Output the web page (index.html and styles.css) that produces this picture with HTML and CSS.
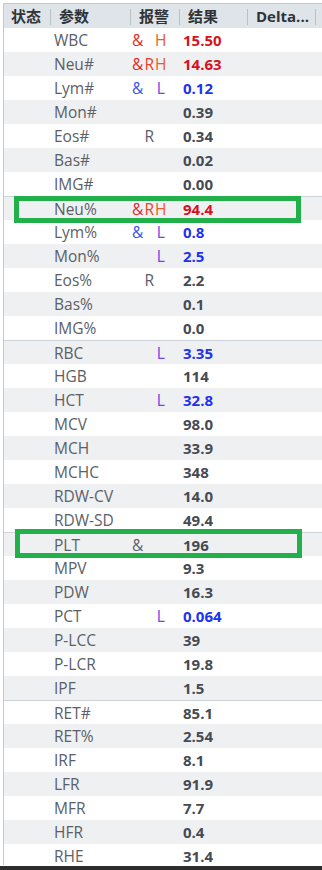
FILE: index.html
```html
<!DOCTYPE html>
<html lang="zh">
<head>
<meta charset="utf-8">
<link rel="stylesheet" href="styles.css">
</head>
<body>
<div class="panel">
  <div class="table">
    <div class="head">
      <div class="hc">状态</div>
      <div class="hc">参数</div>
      <div class="hc">报警</div>
      <div class="hc">结果</div>
      <div class="hc">Delta...</div>
      <div class="hc last"></div>
    </div>
    <div class="body">
      <div class="row"><span></span><span class="p">WBC</span><span class="f"><i class="r1">&amp;</i><i></i><i class="r3">H</i></span><span class="v red">15.50</span></div>
      <div class="row"><span></span><span class="p">Neu#</span><span class="f"><i class="r1">&amp;</i><i class="r2">R</i><i class="r3">H</i></span><span class="v red">14.63</span></div>
      <div class="row"><span></span><span class="p">Lym#</span><span class="f"><i class="b1">&amp;</i><i></i><i class="b3">L</i></span><span class="v blue">0.12</span></div>
      <div class="row"><span></span><span class="p">Mon#</span><span class="f"></span><span class="v">0.39</span></div>
      <div class="row"><span></span><span class="p">Eos#</span><span class="f"><i></i><i class="g">R</i><i></i></span><span class="v">0.34</span></div>
      <div class="row"><span></span><span class="p">Bas#</span><span class="f"></span><span class="v">0.02</span></div>
      <div class="row"><span></span><span class="p">IMG#</span><span class="f"></span><span class="v">0.00</span></div>
      <div class="row sep"><span></span><span class="p">Neu%</span><span class="f"><i class="r1">&amp;</i><i class="r2">R</i><i class="r3">H</i></span><span class="v red">94.4</span></div>
      <div class="row"><span></span><span class="p">Lym%</span><span class="f"><i class="b1">&amp;</i><i></i><i class="b3">L</i></span><span class="v blue">0.8</span></div>
      <div class="row"><span></span><span class="p">Mon%</span><span class="f"><i></i><i></i><i class="b3">L</i></span><span class="v blue">2.5</span></div>
      <div class="row"><span></span><span class="p">Eos%</span><span class="f"><i></i><i class="g">R</i><i></i></span><span class="v">2.2</span></div>
      <div class="row"><span></span><span class="p">Bas%</span><span class="f"></span><span class="v">0.1</span></div>
      <div class="row"><span></span><span class="p">IMG%</span><span class="f"></span><span class="v">0.0</span></div>
      <div class="row sep"><span></span><span class="p">RBC</span><span class="f"><i></i><i></i><i class="b3">L</i></span><span class="v blue">3.35</span></div>
      <div class="row"><span></span><span class="p">HGB</span><span class="f"></span><span class="v">114</span></div>
      <div class="row"><span></span><span class="p">HCT</span><span class="f"><i></i><i></i><i class="b3">L</i></span><span class="v blue">32.8</span></div>
      <div class="row"><span></span><span class="p">MCV</span><span class="f"></span><span class="v">98.0</span></div>
      <div class="row"><span></span><span class="p">MCH</span><span class="f"></span><span class="v">33.9</span></div>
      <div class="row"><span></span><span class="p">MCHC</span><span class="f"></span><span class="v">348</span></div>
      <div class="row"><span></span><span class="p">RDW-CV</span><span class="f"></span><span class="v">14.0</span></div>
      <div class="row"><span></span><span class="p">RDW-SD</span><span class="f"></span><span class="v">49.4</span></div>
      <div class="row sep"><span></span><span class="p">PLT</span><span class="f"><i class="g">&amp;</i><i></i><i></i></span><span class="v">196</span></div>
      <div class="row"><span></span><span class="p">MPV</span><span class="f"></span><span class="v">9.3</span></div>
      <div class="row"><span></span><span class="p">PDW</span><span class="f"></span><span class="v">16.3</span></div>
      <div class="row"><span></span><span class="p">PCT</span><span class="f"><i></i><i></i><i class="b3">L</i></span><span class="v blue">0.064</span></div>
      <div class="row"><span></span><span class="p">P-LCC</span><span class="f"></span><span class="v">39</span></div>
      <div class="row"><span></span><span class="p">P-LCR</span><span class="f"></span><span class="v">19.8</span></div>
      <div class="row"><span></span><span class="p">IPF</span><span class="f"></span><span class="v">1.5</span></div>
      <div class="row sep"><span></span><span class="p">RET#</span><span class="f"></span><span class="v">85.1</span></div>
      <div class="row"><span></span><span class="p">RET%</span><span class="f"></span><span class="v">2.54</span></div>
      <div class="row"><span></span><span class="p">IRF</span><span class="f"></span><span class="v">8.1</span></div>
      <div class="row"><span></span><span class="p">LFR</span><span class="f"></span><span class="v">91.9</span></div>
      <div class="row"><span></span><span class="p">MFR</span><span class="f"></span><span class="v">7.7</span></div>
      <div class="row"><span></span><span class="p">HFR</span><span class="f"></span><span class="v">0.4</span></div>
      <div class="row"><span></span><span class="p">RHE</span><span class="f"></span><span class="v">31.4</span></div>
    </div>
  </div>
  <div class="hl hl-neu"></div>
  <div class="hl hl-plt"></div>
  <div class="bar"></div>
</div>
</body>
</html>
```

FILE: styles.css
```css
html, body {
  margin: 0;
  padding: 0;
  background: #ffffff;
}
body {
  width: 322px;
  height: 870px;
  overflow: hidden;
  font-family: "Open Sans", "Noto Sans", "Noto Sans CJK SC", sans-serif;
}
.panel {
  position: relative;
  width: 322px;
  height: 870px;
  display: flex;
  flex-direction: column;
}
.table {
  margin: 3px 0 0 3px;
  border-left: 1px solid #c4c7cb;
  border-top: 1px solid #c4c7cb;
  height: 862px;
  overflow: hidden;
  display: flex;
  flex-direction: column;
}
.head, .row {
  display: grid;
  grid-template-columns: 47px 80px 49px 68px 68px 1fr;
}
.head {
  height: 24px;
  background: #dee4e7;
  flex: none;
}
.hc {
  font-family: "Open Sans", "Noto Sans CJK SC", sans-serif;
  font-weight: 700;
  font-size: 15px;
  color: #2f3338;
  height: 24px;
  line-height: 24px;
  padding-left: 8px;
  white-space: nowrap;
  background: linear-gradient(#b9bfc4, #b9bfc4) no-repeat right 0 top 5px / 1px 16px;
}
.hc:first-child { padding-left: 7px; }
.hc.last { background: none; }
.body {
  display: flex;
  flex-direction: column;
}
.row {
  height: 24px;
  box-sizing: border-box;
  align-items: center;
  font-size: 15.5px;
  line-height: 24px;
}
.row:nth-child(even) { background: #eff0f2; }
.row.sep { border-top: 1px solid #cdd3da; }
.p {
  color: #5b6067;
  padding-left: 3px;
  white-space: nowrap;
}
.f {
  display: flex;
  padding-left: 1px;
  font-size: 15.5px;
}
.f i {
  font-style: normal;
  width: 11.5px;
  text-align: center;
  display: inline-block;
}
.r1 { color: #e5262b; }
.r2 { color: #ea4229; }
.r3 { color: #ef5a26; }
.b1 { color: #3452e6; }
.b3 { color: #6a46ea; }
.g { color: #5b6067; }
.v {
  font-weight: 700;
  font-size: 15px;
  color: #454b52;
  padding-left: 3px;
}
.v.red { color: #d5121e; }
.v.blue { color: #1d33ee; }
.hl {
  position: absolute;
  border: 5px solid #22b04b;
  box-sizing: border-box;
  width: 287px;
}
.hl-neu { left: 14px; top: 196px; height: 27px; }
.hl-plt { left: 15px; top: 529px; height: 29px; }
.bar {
  height: 4px;
  background: #2d2d2d;
  margin-top: 1px;
}
```
